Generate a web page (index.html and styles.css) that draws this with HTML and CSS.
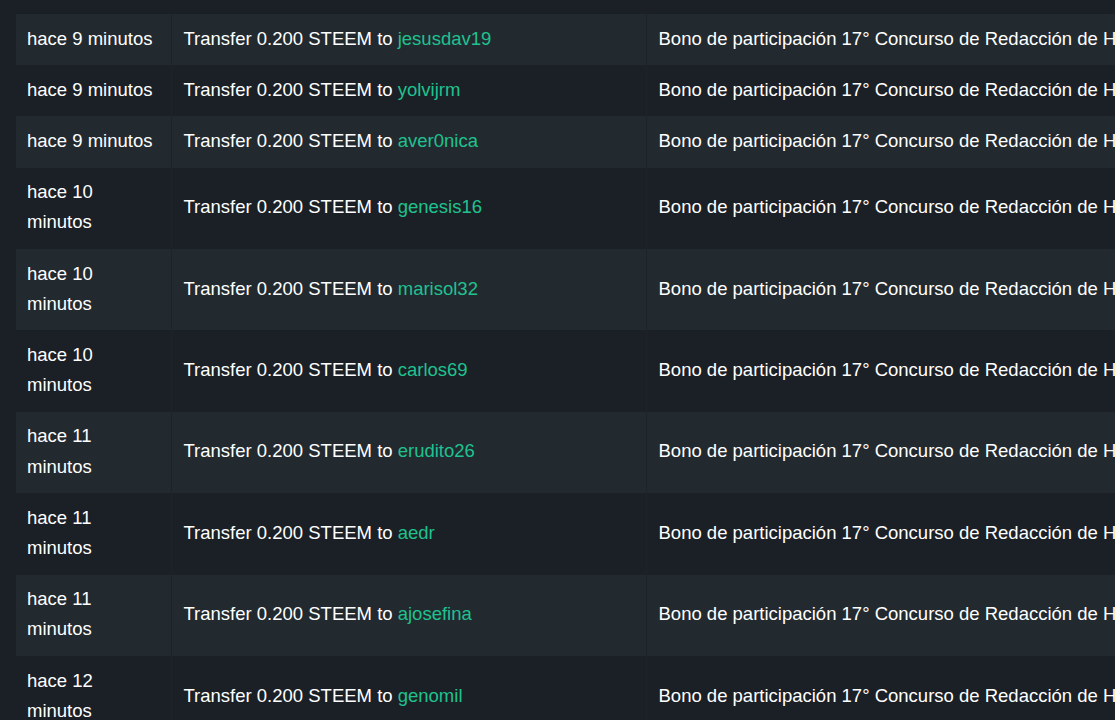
FILE: index.html
```html
<!DOCTYPE html>
<html lang="es">
<head>
<meta charset="utf-8">
<title>Transfers</title>
<link rel="stylesheet" href="styles.css">
</head>
<body>
<div class="wrap">
<table class="tx">
  <colgroup><col class="c-time"><col class="c-op"><col class="c-memo"></colgroup>
  <tbody>
    <tr><td>hace 9 minutos</td><td>Transfer 0.200 STEEM to <a class="acc">jesusdav19</a></td><td class="memo">Bono de participación 17° Concurso de Redacción de Historias Cortas</td></tr>
    <tr><td>hace 9 minutos</td><td>Transfer 0.200 STEEM to <a class="acc">yolvijrm</a></td><td class="memo">Bono de participación 17° Concurso de Redacción de Historias Cortas</td></tr>
    <tr><td>hace 9 minutos</td><td>Transfer 0.200 STEEM to <a class="acc">aver0nica</a></td><td class="memo">Bono de participación 17° Concurso de Redacción de Historias Cortas</td></tr>
    <tr><td>hace 10 minutos</td><td>Transfer 0.200 STEEM to <a class="acc">genesis16</a></td><td class="memo">Bono de participación 17° Concurso de Redacción de Historias Cortas</td></tr>
    <tr><td>hace 10 minutos</td><td>Transfer 0.200 STEEM to <a class="acc">marisol32</a></td><td class="memo">Bono de participación 17° Concurso de Redacción de Historias Cortas</td></tr>
    <tr><td>hace 10 minutos</td><td>Transfer 0.200 STEEM to <a class="acc">carlos69</a></td><td class="memo">Bono de participación 17° Concurso de Redacción de Historias Cortas</td></tr>
    <tr><td>hace 11 minutos</td><td>Transfer 0.200 STEEM to <a class="acc">erudito26</a></td><td class="memo">Bono de participación 17° Concurso de Redacción de Historias Cortas</td></tr>
    <tr><td>hace 11 minutos</td><td>Transfer 0.200 STEEM to <a class="acc">aedr</a></td><td class="memo">Bono de participación 17° Concurso de Redacción de Historias Cortas</td></tr>
    <tr><td>hace 11 minutos</td><td>Transfer 0.200 STEEM to <a class="acc">ajosefina</a></td><td class="memo">Bono de participación 17° Concurso de Redacción de Historias Cortas</td></tr>
    <tr><td>hace 12 minutos</td><td>Transfer 0.200 STEEM to <a class="acc">genomil</a></td><td class="memo">Bono de participación 17° Concurso de Redacción de Historias Cortas</td></tr>
  </tbody>
</table>
</div>
</body>
</html>
```

FILE: styles.css
```css
html, body {
  margin: 0;
  padding: 0;
  background: #1b2026;
  overflow: hidden;
  height: 100%;
}
body {
  font-family: "Liberation Sans", Arial, sans-serif;
  font-size: 18.5px;
  line-height: 30.2px;
  color: #ffffff;
}
.wrap {
  padding: 14px 0 0 16px;
  width: 1400px;
}
.tx {
  border-collapse: collapse;
  table-layout: fixed;
  width: 1300px;
}
.c-time { width: 155px; }
.c-op { width: 475px; }
.tx td {
  padding: 9.5px 12px 11.5px 11px;
  vertical-align: middle;
  box-sizing: border-box;
}
.tx td + td {
  border-left: 1px solid #1d2329;
  padding-left: 12px;
}
.tx tr:nth-child(odd) td {
  background: #222a30;
}
.memo {
  white-space: nowrap;
  overflow: hidden;
}
.acc {
  color: #1fc28f;
  text-decoration: none;
}
```
